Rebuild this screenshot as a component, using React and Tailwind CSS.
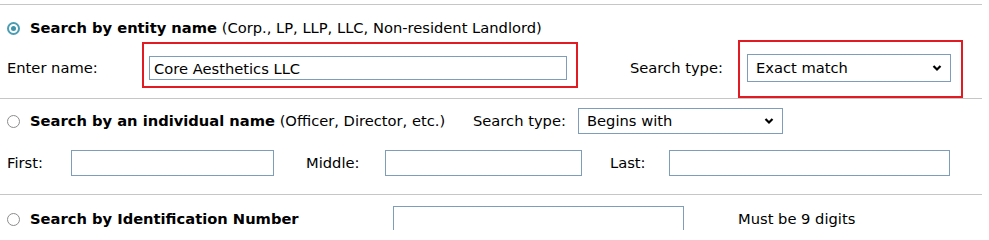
import React from 'react';

const Radio = ({ checked }) =>
    checked ? (
        <span className="w-[13px] h-[13px] shrink-0 rounded-full border-2 border-[#4a9db2] bg-white flex items-center justify-center">
            <span className="w-[5px] h-[5px] rounded-full bg-[#3e93a8]" />
        </span>
    ) : (
        <span className="w-[13px] h-[13px] shrink-0 rounded-full border border-[#8c8c8c] bg-white" />
    );

const Chevron = () => (
    <svg width="10" height="7" viewBox="0 0 10 7" className="absolute right-[9px] top-1/2 -translate-y-1/2 pointer-events-none">
        <path d="M1.5 1.5 L5 5 L8.5 1.5" fill="none" stroke="#000" strokeWidth="2.2" />
    </svg>
);

const Select = ({ value, className }) => (
    <div className={`relative ${className}`}>
        <select
            defaultValue={value}
            className="appearance-none w-full h-full border border-[#7f9db9] bg-white pl-[8px] outline-none text-[14.7px] font-['DejaVu_Sans',Verdana,sans-serif]"
        >
            <option>{value}</option>
        </select>
        <Chevron />
    </div>
);

const Field = ({ className, value = '' }) => (
    <input
        readOnly
        value={value}
        className={`border border-[#7f9db9] bg-white px-[4px] outline-none text-[14.7px] font-['DejaVu_Sans',Verdana,sans-serif] ${className}`}
    />
);

const Rule = () => <div className="w-[982px] border-t border-[#c6c6c6]" />;

export default function App() {
    return (
        <div className="w-[989px] h-[230px] overflow-hidden bg-white text-black text-[14.7px] font-['DejaVu_Sans',Verdana,sans-serif]">
            <div className="h-[4px]" />
            <Rule />

            {/* entity name */}
            <div className="h-[35px] pt-[11px] pl-[7px] flex items-center">
                <Radio checked />
                <span className="ml-[10px] whitespace-nowrap">
                    <b>Search by entity name</b> (Corp., LP, LLP, LLC, Non-resident Landlord)
                </span>
            </div>
            <div className="h-[58px] flex items-start">
                <label className="w-[142px] pl-[7px] mt-[16px] h-[24px] flex items-center whitespace-nowrap">Enter name:</label>
                <div className="mt-[2px] w-[436px] h-[46px] border-2 border-[#e01b22] pl-[5px] pt-[12px]">
                    <Field className="w-[418px] h-[24px]" value="Core Aesthetics LLC" />
                </div>
                <label className="ml-[52px] w-[108px] mt-[14px] h-[28px] flex items-center whitespace-nowrap">Search type:</label>
                <div className="w-[225px] h-[58px] border-2 border-[#e01b22] pl-[7px] pt-[12px]">
                    <Select value="Exact match" className="w-[204px] h-[28px]" />
                </div>
            </div>
            <Rule />

            {/* individual name */}
            <div className="h-[35px] pt-[9px] pl-[7px] flex items-center">
                <Radio />
                <span className="ml-[10px] w-[443px] whitespace-nowrap">
                    <b>Search by an individual name</b> (Officer, Director, etc.)
                </span>
                <label className="w-[105px] whitespace-nowrap">Search type:</label>
                <Select value="Begins with" className="w-[205px] h-[26px]" />
            </div>
            <div className="mt-[16px] h-[26px] flex items-center">
                <label className="w-[71px] pl-[7px]">First:</label>
                <Field className="w-[203px] h-[26px]" />
                <label className="ml-[32px] w-[79px]">Middle:</label>
                <Field className="w-[197px] h-[26px]" />
                <label className="pl-[28px] w-[87px]">Last:</label>
                <Field className="w-[281px] h-[26px]" />
            </div>
            <div className="h-[18px]" />
            <Rule />

            {/* identification number */}
            <div className="mt-[11px] h-[26px] pl-[7px] flex items-center">
                <Radio />
                <span className="ml-[10px] w-[363px] whitespace-nowrap">
                    <b>Search by Identification Number</b>
                </span>
                <Field className="w-[291px] h-[26px]" />
                <span className="ml-[54px] whitespace-nowrap">Must be 9 digits</span>
            </div>
        </div>
    );
}
